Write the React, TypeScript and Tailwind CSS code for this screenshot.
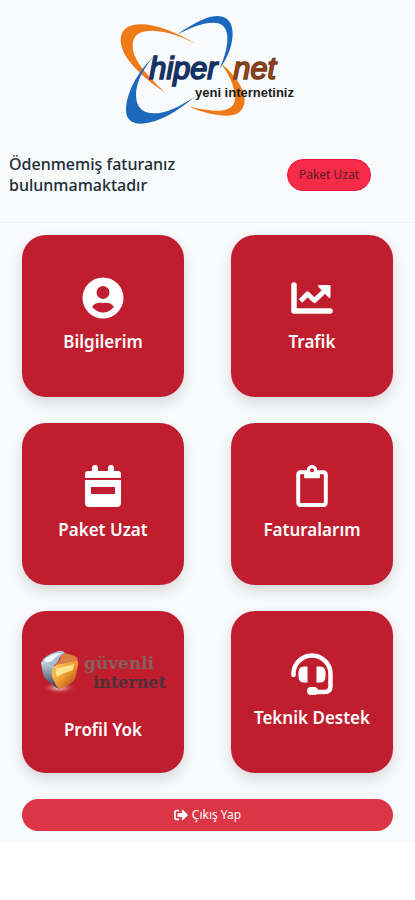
import { FaRegClipboard, FaSignOutAlt } from "react-icons/fa";

const Logo = () => (
  <svg viewBox="0 0 660 420" className="w-[220px]" role="img" aria-label="hiper net">
    <path fill="#ef7a1a" d="M285 130C220 92 165 73 122 73C80 73 62 92 62 122C64 170 115 222 195 278C130 215 98 175 98 138C98 104 118 92 160 92C200 94 240 107 285 130Z" />
    <path fill="#1c68bd" d="M160 170C108 220 78 285 78 330C78 358 96 372 124 371C180 368 235 330 285 290C235 322 198 340 162 340C124 340 108 318 108 284C109 248 125 212 160 170Z" />
    <path fill="#1c68bd" d="M230 105C285 65 325 48 353 48C386 49 399 72 398 106C395 145 382 175 358 207C376 168 383 135 382 110C380 80 365 68 340 68C308 68 272 82 230 105Z" />
    <path fill="#ef7a1a" d="M362 190C408 226 433 266 434 302C432 336 408 348 375 347C335 345 298 334 265 318C305 329 335 333 360 332C392 330 407 315 405 288C402 256 388 224 362 190Z" />
    <g fontFamily="Liberation Sans" fontStyle="italic" fontSize="92" strokeWidth="5">
      <text x="148" y="236" fill="#153d7a" stroke="#14305f">hiper</text>
      <text x="400" y="236" fill="#a9501a" stroke="#7a3d18">net</text>
    </g>
    <text x="285" y="292" fontFamily="Liberation Sans" fontWeight="700" fontSize="39" fill="#1c1c1c">
      yeni internetiniz
    </text>
  </svg>
);

const ProfileIcon = () => (
  <svg viewBox="0 0 42 42" className="size-[42px]">
    <circle cx="21" cy="21" r="20.5" fill="#fff" />
    <circle cx="21" cy="15.500" r="6.500" fill="#c01d2e" />
    <path fill="#c01d2e" d="M10 30C14 24.500 18 26 21 26C24 26 28 24.500 32 30C28 34 25 35.500 21 35.500C17 35.500 14 34 10 30Z" />
  </svg>
);

const ChartIcon = () => (
  <svg viewBox="0 0 42 42" className="size-[42px]" fill="none" stroke="#fff" strokeLinejoin="round">
    <path strokeWidth="5.500" strokeLinecap="round" d="M3 8V34H39" />
    <path strokeWidth="5" d="M9.500 24L16.500 17L23.500 23.500L34 13.500" />
    <path fill="#fff" strokeWidth="2" d="M28 9H38.500V20Z" />
  </svg>
);

const CalendarIcon = () => (
  <svg viewBox="0 0 42 42" className="size-[42px]" fill="#fff">
    <path d="M3 13V9Q3 6 6 6H10V3Q10 0 13 0T16 3V6H26V3Q26 0 29 0T32 3V6H36Q39 6 39 9V13Z" />
    <path fillRule="evenodd" d="M3 15H39V38Q39 42 35 42H7Q3 42 3 38ZM9 22V29H33V22Z" />
  </svg>
);

const HeadsetIcon = () => (
  <svg viewBox="0 0 42 42" className="size-[42px]">
    <path fill="none" stroke="#fff" strokeWidth="4.500" strokeLinecap="round" d="M2.500 22V21A18.500 18.500 0 0 1 39.500 21V33Q39.500 39 33.500 39H21" />
    <path fill="#fff" d="M16.500 13.500V29.500H13Q7.500 29.500 7.500 23.500V19.500Q7.500 13.500 13 13.500Z" />
    <path fill="#fff" d="M25.500 13.500V29.500H29Q34.500 29.500 34.500 23.500V19.500Q34.500 13.500 29 13.500Z" />
    <rect x="16" y="34" width="11" height="8" rx="4" fill="#fff" />
  </svg>
);

const SafeInternet = () => (
  <svg viewBox="0 0 130 66" className="h-[66px] w-[130px]" role="img" aria-label="güvenli internet">
    <defs>
      <linearGradient id="gold" x1="0" y1="0" x2="1" y2="1">
        <stop offset="0" stopColor="#ffd673" />
        <stop offset="0.500" stopColor="#f09a30" />
        <stop offset="1" stopColor="#9a3f12" />
      </linearGradient>
      <linearGradient id="steel" x1="0" y1="0" x2="0" y2="1">
        <stop offset="0" stopColor="#cfdce6" />
        <stop offset="1" stopColor="#25384a" />
      </linearGradient>
      <radialGradient id="glow">
        <stop offset="0" stopColor="#ffe1d6" />
        <stop offset="1" stopColor="#c01d2e" stopOpacity="0" />
      </radialGradient>
    </defs>
    <ellipse cx="21" cy="47" rx="18" ry="6" fill="url(#glow)" />
    <path fill="url(#steel)" d="M3 22Q3 20 6 20L16 22L17 44L22 48Q19 48 9 39Q6 37 5 33Z" />
    <path fill="#a9bfd0" d="M4 20Q6 15 20 10Q25 9 27 12Q22 15 21 18Q20 23 14 25Z" />
    <path fill="#f3f7fa" d="M6 19Q9 15 20 12L24 12Q17 16 14 20Q11 22 7 21Z" />
    <path fill="#d98042" d="M27 12L37 15Q40 17 40 21L24 25L16 24Q21 22 22 18Q23 14 27 12Z" />
    <path fill="url(#gold)" d="M15 27Q17 23 24 23L38 20Q41 20 40 25L37 38Q35 42 25 47Q22 49 19 45L16 40Q12 35 15 27Z" />
    <path fill="#ffe48c" d="M19 27Q26 26 36 23L35 29Q27 31 19 36Q17 31 19 27Z" />
  <g fontFamily="DejaVu Serif" fontWeight="700">
      <text x="46" y="28" fontSize="17" fill="#85605f">güvenli</text>
      <text x="55" y="47" fontSize="16" fill="#493238">internet</text>
    </g>
  </svg>
);

const menu = [
  { title: "Bilgilerim", icon: <ProfileIcon /> },
  { title: "Trafik", icon: <ChartIcon /> },
  { title: "Paket Uzat", icon: <CalendarIcon /> },
  { title: "Faturalarım", icon: <FaRegClipboard size={42} /> },
  { title: "Profil Yok", icon: <SafeInternet /> },
  { title: "Teknik Destek", icon: <HeadsetIcon /> },
];

const MenuCard = ({ title, icon }) => (
  <button className="flex aspect-square flex-col items-center justify-center gap-[10px] rounded-3xl bg-[#c01d2e] text-white shadow-[0_6px_14px_rgba(0,0,0,0.14)]">
    {icon}
    <span className="text-[17px] leading-[26px] font-semibold whitespace-nowrap">{title}</span>
  </button>
);

const App = () => {
  return (
    <div className="min-h-screen bg-white font-['Noto_Sans',sans-serif]">
      <div className="bg-[#f8fafc] pb-3">
        <header className="flex h-[140px] justify-center pl-1">
          <Logo />
        </header>

        <section className="flex items-center justify-between border-b border-[#f1f4f6] pt-[14px] pr-11 pb-[26px] pl-[9px]">
          <h1 className="w-[200px] text-base leading-[21px] font-medium text-[#212c38]">
            Ödenmemiş faturanız bulunmamaktadır
          </h1>
          <button className="h-8 rounded-full border border-[#ec1740] bg-[#f52b47] px-[11px] text-xs whitespace-nowrap text-[#5c1a2a]">
            Paket Uzat
          </button>
        </section>

        <main className="px-[22px] pt-3">
          <div className="grid grid-cols-2 gap-x-[47px] gap-y-[26px]">
            {menu.map((item) => (
              <MenuCard key={item.title} title={item.title} icon={item.icon} />
            ))}
          </div>
          <button className="mt-[26px] flex h-8 w-full items-center justify-center gap-1 rounded-full bg-[#dc3545] text-xs text-white">
            <FaSignOutAlt size={14} />
            Çıkış Yap
          </button>
        </main>
      </div>
    </div>
  );
};

export default App;
